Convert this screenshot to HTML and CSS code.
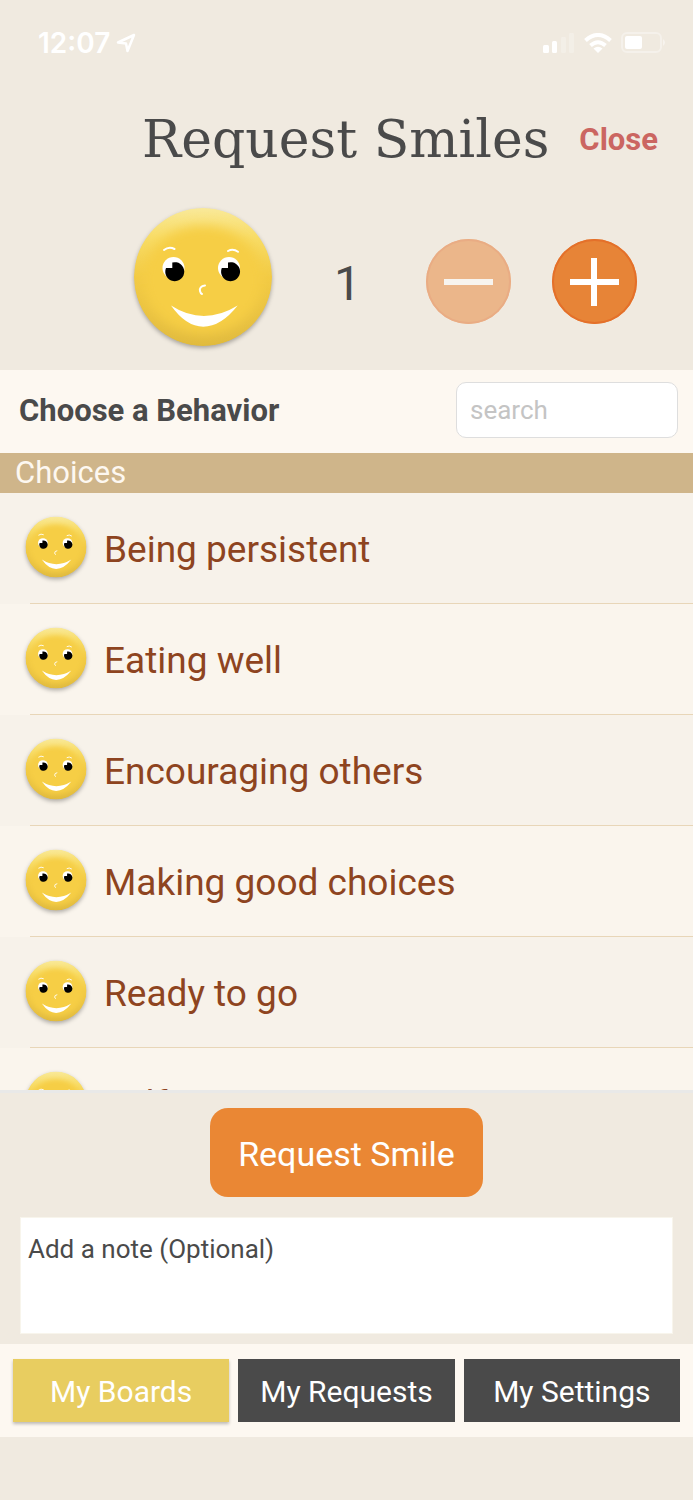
FILE: index.html
```html
<!DOCTYPE html>
<html lang="en">
<head>
<meta charset="utf-8">
<meta name="viewport" content="width=device-width, initial-scale=1">
<title>Request Smiles</title>
<link rel="stylesheet" href="styles.css">
</head>
<body>
<svg class="defs" width="0" height="0" aria-hidden="true">
  <defs>
    <linearGradient id="fade" x1="0" y1="0" x2="0" y2="1">
      <stop offset="0" stop-color="#f9e999"/>
      <stop offset="0.22" stop-color="#f8dc66"/>
      <stop offset="0.5" stop-color="#f2ca43"/>
      <stop offset="0.8" stop-color="#e8c141"/>
      <stop offset="1" stop-color="#e0ba3e"/>
    </linearGradient>
    <filter id="soft" x="-20%" y="-20%" width="140%" height="140%"><feGaussianBlur stdDeviation="6"/></filter>
    <clipPath id="disc"><circle cx="70" cy="70" r="69"/></clipPath>
  </defs>
  <symbol id="smile" viewBox="0 0 140 140">
    <g clip-path="url(#disc)">
      <circle cx="70" cy="70" r="69" fill="url(#fade)"/>
      <ellipse cx="70" cy="73" rx="60" ry="54" fill="#f6ce44" filter="url(#soft)"/>
    </g>
    <g fill="none" stroke="#fff" stroke-width="2" stroke-linecap="round">
      <path d="M31 43q5-4 10.500-1M95 44q5-3 10 .800"/>
      <path d="M72 78.500q-6 1-5 5.500q.500 2.500 2 3"/>
    </g>
    <circle cx="40.500" cy="61" r="11" fill="#fff"/>
    <circle cx="96" cy="61" r="11" fill="#fff"/>
    <path d="M39.300 55.500A9.500 9.500 0 1 1 33 61h6.300z"/>
    <path d="M95 55.500A9.500 9.500 0 1 1 88.800 61H95z"/>
    <path d="M38 98.500q32.500 21 66.700 0Q88 119.700 70.300 119.700Q53 119.700 38 98.500z" fill="#fff"/>
  </symbol>
</svg>
<div class="app">
  <div class="status">
    <div class="status-group">
      <span class="time">12:07</span>
      <svg width="20" height="20" viewBox="0 0 20 20" fill="none" stroke="#fff" stroke-width="2.500" stroke-linejoin="round"><path d="M18 2L2 9.500L10 10.500L11.500 18Z"/></svg>
    </div>
    <div class="status-group status-right">
      <svg width="32" height="20" viewBox="0 0 32 20" fill="#fff"><rect y="12" width="6" height="8" rx="1.500"/><rect x="9" y="8" width="5" height="12" rx="1.500"/><g opacity=".25"><rect x="18" y="4" width="5" height="16" rx="1.500"/><rect x="26" width="5" height="20" rx="1.500"/></g></svg>
      <svg width="28" height="20" viewBox="0 0 28 20" fill="none" stroke="#fff" stroke-width="4"><path d="M1.500 7.500Q14-3.500 26.500 7.500"/><path d="M6.500 12.500Q14 6 21.500 12.500"/><path d="M9.500 15.500Q14 12 18.500 15.500L14 20Z" fill="#fff" stroke="none"/></svg>
      <svg width="46" height="22" viewBox="0 0 46 22"><rect x="1" y="1" width="39" height="19" rx="5" fill="none" stroke="#fff" stroke-opacity=".35" stroke-width="2"/><rect x="4" y="4" width="17" height="13" rx="2" fill="#fff"/><path d="M42 7q4 3.500 0 7z" fill="#fff" opacity=".45"/></svg>
    </div>
  </div>

  <header class="header">
    <h1 class="title">Request Smiles</h1>
    <button class="close" type="button">Close</button>
  </header>

  <section class="counter" aria-label="Number of smiles">
    <svg class="face face-large"><use href="#smile"/></svg>
    <output class="count">1</output>
    <button class="round" type="button" aria-label="Remove a smile" disabled><svg viewBox="0 0 85 85" stroke="#fff" stroke-width="6"><path d="M18 43h49"/></svg></button>
    <button class="round" type="button" aria-label="Add a smile"><svg viewBox="0 0 85 85" stroke="#fff" stroke-width="6"><path d="M18 43h49M42 19v48"/></svg></button>
  </section>

  <div class="chooser">
    <label class="chooser-label" for="search">Choose a Behavior</label>
    <input class="search" id="search" type="search" placeholder="search">
  </div>
  <h2 class="section-title">Choices</h2>
  <ul class="list">
    <li class="item"><svg class="face"><use href="#smile"/></svg><span>Being persistent</span></li>
    <li class="item"><svg class="face"><use href="#smile"/></svg><span>Eating well</span></li>
    <li class="item"><svg class="face"><use href="#smile"/></svg><span>Encouraging others</span></li>
    <li class="item"><svg class="face"><use href="#smile"/></svg><span>Making good choices</span></li>
    <li class="item"><svg class="face"><use href="#smile"/></svg><span>Ready to go</span></li>
    <li class="item"><svg class="face"><use href="#smile"/></svg><span>Self-starting</span></li>
  </ul>

  <section class="compose">
    <button class="submit" type="button">Request Smile</button>
    <textarea class="note" aria-label="Note" placeholder="Add a note (Optional)"></textarea>
  </section>

  <nav class="tabs">
    <button class="tab tab-active" type="button">My Boards</button>
    <button class="tab" type="button">My Requests</button>
    <button class="tab" type="button">My Settings</button>
  </nav>
</div>
</body>
</html>
```
FILE: styles.css
```css
* { box-sizing: border-box; }
body {
  margin: 0;
  background: #f0eae0;
  color: #4a4a4a;
  font-family: Roboto, "Liberation Sans", sans-serif;
}
button, input, textarea { font: inherit; }
button { border: 0; padding: 0; }
.defs { position: absolute; }
.app {
  display: flex;
  flex-direction: column;
  height: 100vh;
  padding-bottom: 63px;
}
.status {
  display: flex;
  justify-content: space-between;
  align-items: center;
  height: 86px;
  padding: 0 26px 0 38px;
  color: #fff;
}
.status-group { display: flex; align-items: center; gap: 6px; }
.status-right { gap: 9px; }
.time { font: 600 28px Inter, sans-serif; }
.header {
  display: flex;
  justify-content: flex-end;
  align-items: center;
  gap: 30px;
  height: 106px;
  padding-right: 35px;
}
.title {
  margin: 0;
  font: 400 52px "Roboto Slab", "DejaVu Serif", serif;
  white-space: nowrap;
}
.close { background: none; color: #cb6661; font-size: 31px; font-weight: 700; }
.counter {
  display: flex;
  align-items: center;
  justify-content: flex-end;
  height: 178px;
  padding-right: 56px;
}
.face {
  flex: none;
  width: 62px;
  height: 62px;
  margin-bottom: 4px;
  filter: drop-shadow(0 2px 2px rgba(0, 0, 0, .3));
}
.face-large { width: 140px; height: 140px; margin-bottom: 8px; }
.count { width: 153px; padding: 4px 4px 0 0; text-align: center; font-size: 48px; }
.round {
  display: flex;
  width: 85px;
  height: 85px;
  border-radius: 50%;
  background: #e78437;
  box-shadow: inset 0 0 0 2px #e4702a;
}
.round:disabled { opacity: .5; }
.round + .round { margin-left: 41px; }
.chooser {
  display: flex;
  justify-content: space-between;
  align-items: center;
  height: 83px;
  padding: 0 15px 3px 19px;
  background: #fdf8f1;
}
.chooser-label { font-size: 31px; font-weight: 700; }
.search {
  width: 222px;
  height: 56px;
  padding: 0 13px;
  border: 1px solid #dedede;
  border-radius: 10px;
  background: #fff;
  font-size: 26px;
}
.search::placeholder { color: #c4c4c4; }
.section-title {
  margin: 0;
  padding-left: 15px;
  background: #cfb58a;
  color: #fdf8f1;
  font-size: 31px;
  font-weight: 400;
  line-height: 40px;
}
.list {
  flex: 1;
  min-height: 0;
  margin: 0;
  padding: 0;
  overflow: hidden;
  list-style: none;
}
.item {
  display: flex;
  align-items: center;
  gap: 17px;
  height: 111px;
  padding-left: 25px;
  background: linear-gradient(#e8d6b8, #e8d6b8) 30px 100% / 100% 1px no-repeat #f7f2ea;
  color: #8e4420;
  font-size: 37px;
}
.item span { padding-top: 2px; }
.item:nth-child(even) { background-color: #faf5ed; }
.compose {
  display: flex;
  flex-direction: column;
  align-items: center;
  gap: 20px;
  padding: 15px 20px 10px;
  border-top: 3px solid #e9e9e8;
}
.submit {
  padding: 3px 28px 0;
  border-radius: 18px;
  background: #ea8734;
  color: #fff;
  font-size: 34px;
  line-height: 86px;
}
.note {
  display: block;
  width: 100%;
  height: 117px;
  padding: 16px 7px;
  border: 1px solid #f8f5ec;
  background: #fff;
  font-size: 26px;
  resize: none;
}
.note::placeholder { color: #4a4a4a; }
.tabs {
  display: grid;
  grid-template-columns: repeat(3, 1fr);
  gap: 9px;
  padding: 15px 13px;
  background: #fdf8f1;
}
.tab {
  padding-top: 2px;
  background: #4a4a4a;
  color: #fff;
  font-size: 30px;
  line-height: 61px;
}
.tab-active { background: #e8cd60; box-shadow: 0 2px 3px rgba(0, 0, 0, .25); }
```
